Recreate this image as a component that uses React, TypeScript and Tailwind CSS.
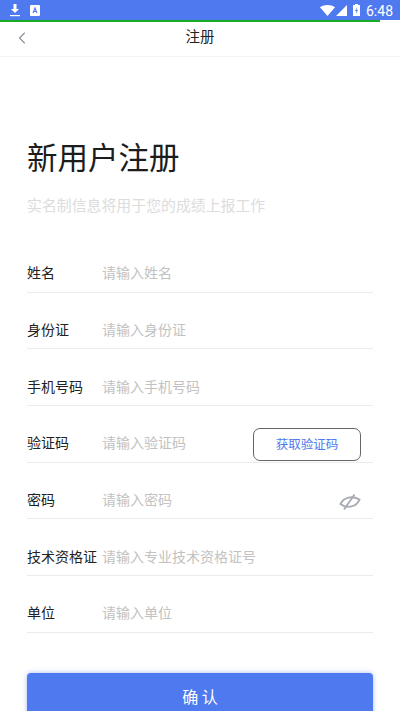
import { ChevronLeft } from 'lucide-react';

const fields = [
    { label: '姓名', placeholder: '请输入姓名' },
    { label: '身份证', placeholder: '请输入身份证' },
    { label: '手机号码', placeholder: '请输入手机号码' },
    { label: '验证码', placeholder: '请输入验证码', code: true },
    { label: '密码', placeholder: '请输入密码', eye: true },
    { label: '技术资格证', placeholder: '请输入专业技术资格证号' },
    { label: '单位', placeholder: '请输入单位' },
];

const StatusBar = () => (
    <div className="relative h-[20px] bg-[#4f79ee] flex items-center text-white shrink-0">
        <svg width="12" height="14" viewBox="0 0 12 14" className="ml-[9px]" fill="white">
            <path d="M4.5 1h3v5h2.5L6 10 2 6h2.5z" />
            <rect x="1" y="12" width="10" height="1.2" />
        </svg>
        <svg width="10" height="11" viewBox="0 0 10 11" className="ml-[9px]">
            <rect width="10" height="11" rx="1" fill="white" />
            <path d="M3 8l2-5 2 5M3.8 6.5h2.4" stroke="#4f79ee" strokeWidth="1.1" fill="none" />
        </svg>
        <div className="ml-auto flex items-center mr-[7px]">
            <svg width="15" height="11" viewBox="0 0 15 11" fill="white">
                <path d="M0 2.2C4-.7 11-.7 15 2.2L7.5 11z" />
            </svg>
            <svg width="11" height="11" viewBox="0 0 11 11" fill="white" className="ml-[1px]">
                <path d="M11 0v11H0z" />
            </svg>
            <svg width="7" height="12" viewBox="0 0 7 12" className="ml-[6px]">
                <path d="M2 0h3v1h2v11H0V1h2z" fill="white" />
                <path d="M4 3L2 7h1.4L3 10l2-4H3.6z" fill="#4f79ee" />
            </svg>
            <span className="ml-[6px] text-[14px] font-['Roboto',sans-serif] leading-none mt-[1px]">6:48</span>
        </div>
        <div className="absolute left-0 bottom-[-2px] h-[2px] w-[380px] bg-[#18ac22]" />
    </div>
);

const Row = ({ field }: { field: (typeof fields)[number] }) => (
    <div className="h-[56.67px] pt-[18px] flex items-center border-b border-[#ebebeb] relative">
        <span className="w-[75px] shrink-0 text-[14px] text-[#222] whitespace-nowrap">{field.label}</span>
        <span className="text-[14px] text-[#c2c2c2]">{field.placeholder}</span>
        {field.code && (
            <div className="absolute right-[12px] top-[22px] w-[108px] h-[33px] rounded-[7px] border border-[#666] flex items-center justify-center text-[12.5px] text-[#4f79ee]">
                获取验证码
            </div>
        )}
        {field.eye && (
            <svg width="22" height="18" viewBox="0 0 22 18" className="absolute right-[12px] top-[30px]" fill="none" stroke="#a8abb5" strokeWidth="1.9">
                <path d="M1.500 11C5 4 13 2.500 20.500 6.500 18 13.500 8 16.500 1.500 11z" />
                <path d="M5 16.500L15.500 1.500" />
            </svg>
        )}
    </div>
);

export default function App() {
    return (
        <div className="w-[400px] h-[711px] overflow-hidden bg-white flex flex-col font-['Noto_Sans_CJK_SC','Noto_Sans',sans-serif]">
            <StatusBar />
            <div className="h-[37px] shrink-0 flex items-center justify-center relative border-b border-[#f3f3f3]">
                <ChevronLeft size={20} strokeWidth={1.3} className="absolute left-[12px] top-[8px] text-[#8a8f9c]" />
                <span className="text-[14.5px] leading-[20px] text-[#222] mb-[4px]">注册</span>
            </div>
            <div className="px-[27px] flex flex-col">
                <h1 className="mt-[77px] text-[30.5px] leading-[44px] font-normal text-[#1c1c1c]">新用户注册</h1>
                <p className="mt-[16px] text-[14.9px] leading-[22px] text-[#dcdcdc]">实名制信息将用于您的成绩上报工作</p>
                <div className="mt-[20px] flex flex-col">
                    {fields.map((f) => (
                        <Row key={f.label} field={f} />
                    ))}
                </div>
                <div className="mt-[40px] h-[60px] rounded-[4px] bg-[#4f79ee] shadow-[0_0_5px_rgba(79,121,238,0.5)] flex justify-center pt-[11px] text-[16px] text-white">
                    确 认
                </div>
            </div>
        </div>
    );
}
